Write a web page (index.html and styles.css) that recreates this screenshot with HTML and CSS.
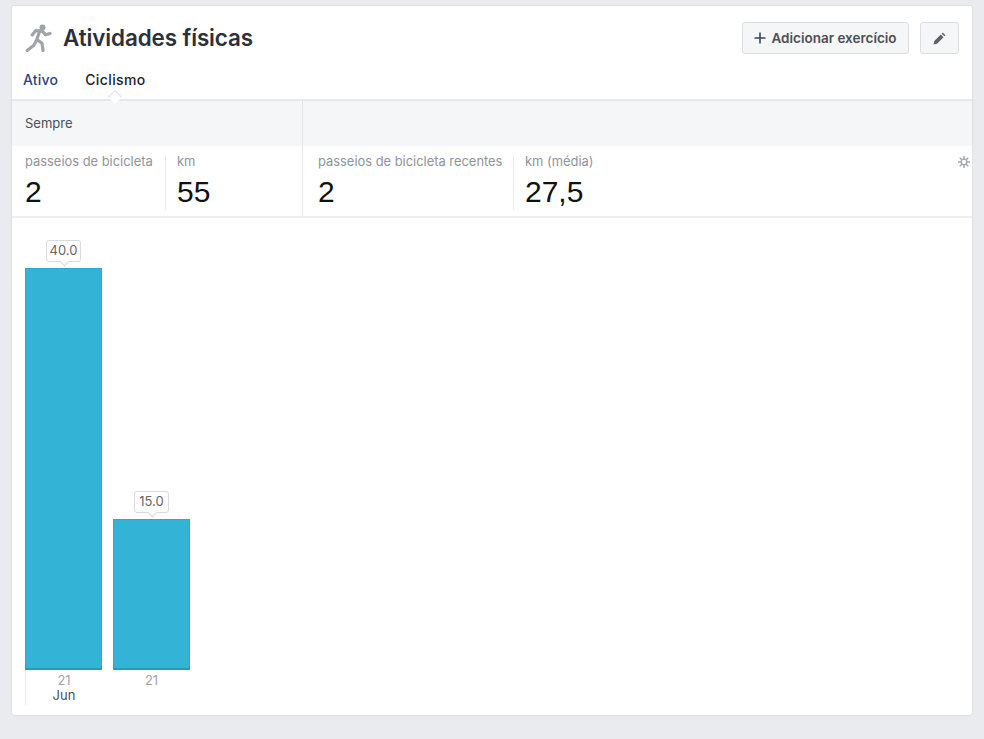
FILE: index.html
```html
<!DOCTYPE html>
<html lang="pt">
<head>
<meta charset="utf-8">
<title>Atividades físicas</title>
<link rel="stylesheet" href="styles.css">
</head>
<body>
<main class="card">
  <header class="head">
    <div class="title-row">
      <svg class="runner" viewBox="0 0 28 28" aria-hidden="true">
        <circle cx="18.500" cy="3.600" r="3" fill="#a0a3a9"/>
        <path d="M26 9.500l-4.600 1.200-3-3.600-6.600-.6-3.600 4.600M15.500 7.500l-2.700 8 5.200 3.800 1 7.200M12.400 16.500l-2.600 4.700-6.600 5.300" fill="none" stroke="#a0a3a9" stroke-width="3.200" stroke-linecap="round" stroke-linejoin="round"/>
      </svg>
      <h1 class="title">Atividades físicas</h1>
      <div class="actions">
        <button class="btn btn-add" type="button">
          <svg class="plus" viewBox="0 0 12 12" aria-hidden="true"><path d="M6 .5v11M.5 6h11" stroke="#3b4659" stroke-width="1.600" fill="none"/></svg>
          Adicionar exercício
        </button>
        <button class="btn btn-edit" type="button" aria-label="Editar">
          <svg class="pencil" viewBox="0 0 12 12" aria-hidden="true"><path d="M.5 11.500l.7-3.200 6-6 2.500 2.500-6 6zM8 1.500l1-1 2.500 2.500-1 1z" fill="#5d6168"/></svg>
        </button>
      </div>
    </div>
    <nav class="tabs">
      <span class="tab tab-link">Ativo</span>
      <span class="tab tab-on">Ciclismo</span>
    </nav>
  </header>

  <section class="summary">
    <div class="group group-all">
      <div class="band">Sempre</div>
      <div class="stats">
        <div class="stat stat-rides"><span class="label">passeios de bicicleta</span><span class="value">2</span></div>
        <div class="stat"><span class="label">km</span><span class="value">55</span></div>
      </div>
    </div>
    <div class="group group-recent">
      <div class="band"></div>
      <div class="stats">
        <div class="stat stat-recent"><span class="label">passeios de bicicleta recentes</span><span class="value">2</span></div>
        <div class="stat stat-avg"><span class="label">km (média)</span><span class="value">27,5</span></div>
        <svg class="gear" viewBox="0 0 12 12" aria-hidden="true">
          <path d="M6 0v12M0 6h12M1.800 1.800l8.400 8.400M10.200 1.800l-8.400 8.400" stroke="#a4a7ad" stroke-width="1.500" fill="none"/>
          <circle cx="6" cy="6" r="2.800" fill="#fff" stroke="#a4a7ad" stroke-width="1.300"/>
        </svg>
      </div>
    </div>
  </section>

  <section class="chart">
    <div class="col">
      <div class="plot">
        <span class="tip">40.0</span>
        <div class="bar bar-40"></div>
      </div>
      <div class="tick tick-first"><span class="day">21</span><span class="month">Jun</span></div>
    </div>
    <div class="col">
      <div class="plot">
        <span class="tip">15.0</span>
        <div class="bar bar-15"></div>
      </div>
      <div class="tick"><span class="day">21</span></div>
    </div>
  </section>
</main>
</body>
</html>
```
FILE: styles.css
```css
* { box-sizing: border-box; }
html, body { margin: 0; height: 100%; }
body {
  background: #e9ebee;
  padding: 5px 11px 24px 11px;
  font-family: Inter, "Liberation Sans", sans-serif;
  color: #1d2129;
  overflow: hidden;
}
.card {
  height: 711px;
  background: #fff;
  border: 1px solid #dddfe2;
  border-radius: 3px;
}
.head {
  height: 95px;
  padding: 16px 13px 0 11px;
  border-bottom: 2px solid #e6e8eb;
  position: relative;
}
.title-row { display: flex; align-items: center; height: 32px; }
.runner { width: 28px; height: 28px; margin-right: 11px; margin-left: 1px; flex: none; }
.title { margin: 0; font-size: 22.400px; line-height: 30px; font-weight: 600; color: #2b303b; letter-spacing: -.1px; }
.actions { margin-left: auto; display: flex; gap: 11px; }
.btn {
  height: 32px;
  background: #f5f6f7;
  border: 1px solid #dadde1;
  border-radius: 3px;
  display: flex;
  align-items: center;
  justify-content: center;
  font: 600 13.500px/16px Inter, "Liberation Sans", sans-serif;
  color: #4b4f56;
  padding: 0;
}
.btn-add { width: 167px; gap: 5px; }
.btn-edit { width: 39px; }
.plus { width: 12px; height: 12px; }
.pencil { width: 13px; height: 13px; }
.tabs { display: flex; gap: 27px; margin-top: 17px; padding-left: 0; }
.tab { font-size: 14px; line-height: 18px; font-weight: 500; letter-spacing: .2px; }
.tab-link { color: #2f3f84; }
.tab-on { color: #1d2129; position: relative; letter-spacing: .4px; }
.tab-on::after {
  content: "";
  position: absolute;
  left: 50%;
  bottom: -13px;
  width: 9px;
  height: 9px;
  margin-left: -5px;
  background: #fff;
  border-right: 1px solid #e0e2e5;
  border-bottom: 1px solid #e0e2e5;
  transform: rotate(225deg);
}
.summary { display: flex; height: 117px; border-bottom: 2px solid #eceef0; }
.group-all { width: 291px; border-right: 1px solid #e3e5e8; flex: none; }
.group-recent { flex: 1; min-width: 0; }
.band {
  height: 45px;
  background: #f5f6f7;
  padding: 14px 13px 0;
  font-size: 13px;
  line-height: 16px;
  color: #4b4f56;
}
.stats { display: flex; position: relative; height: 70px; padding-top: 9px; }
.stat { display: flex; flex-direction: column; padding-left: 13px; }
.stat + .stat { border-left: 1px solid #e9ebee; padding-left: 11px; height: 55px; }
.stat-rides { width: 153px; }
.stat-recent { width: 210px; padding-left: 15px; }
.label { font-size: 12.900px; line-height: 14px; color: #90949c; white-space: nowrap; }
.value { font-size: 30px; line-height: 34px; margin-top: 6px; color: #111; font-family: "Liberation Sans", sans-serif; }
.gear { position: absolute; right: 2px; top: 10px; width: 12px; height: 12px; }
.chart { display: flex; gap: 11px; padding: 0 0 0 13px; height: 497px; }
.col { width: 77px; display: flex; flex-direction: column; }
.plot { height: 452px; display: flex; flex-direction: column; justify-content: flex-end; align-items: center; }
.bar { width: 77px; background: #33b4d7; border: 1px solid #2aa9cc; border-bottom: 2px solid #1e9dbf; }
.bar-40 { height: 402px; }
.bar-15 { height: 151px; }
.tip {
  position: relative;
  font-size: 13px;
  line-height: 19px;
  height: 22px;
  width: 35px;
  text-align: center;
  color: #666;
  border: 1px solid #d8dade;
  border-radius: 3px;
  background: #fff;
  margin-bottom: 6px;
}
.tip::after {
  content: "";
  position: absolute;
  left: 50%;
  bottom: -4px;
  width: 6px;
  height: 6px;
  margin-left: -3px;
  background: #fff;
  border-right: 1px solid #d8dade;
  border-bottom: 1px solid #d8dade;
  transform: rotate(45deg);
}
.tick { height: 35px; display: flex; flex-direction: column; align-items: center; padding-top: 3px; }
.tick-first { border-left: 1px solid #e9ebee; }
.day { font-size: 13px; line-height: 15px; color: #a0a3a9; }
.month { font-size: 13px; line-height: 15px; color: #4b4f56; }
```
